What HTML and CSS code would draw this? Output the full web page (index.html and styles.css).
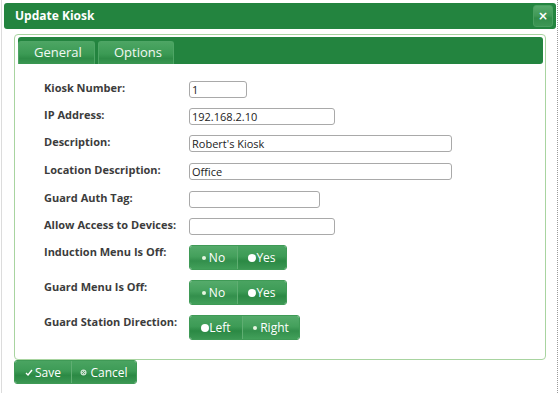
FILE: index.html
```html
<!DOCTYPE html>
<html lang="en">
<head>
    <meta charset="UTF-8">
    <title>Update Kiosk</title>
    <link rel="stylesheet" href="styles.css">
</head>
<body>
<div class="window">
    <div class="dialog">
        <div class="titlebar">
            <span class="title">Update Kiosk</span>
            <button class="close-btn" type="button">&times;</button>
        </div>

        <div class="panel">
            <div class="tabbar">
                <div class="tab active">General</div>
                <div class="tab">Options</div>
            </div>

            <!-- General tab -->
            <form class="kiosk-form">
                <div class="row">
                    <label>Kiosk Number:</label>
                    <input type="text" class="w-num" value="1">
                </div>
                <div class="row">
                    <label>IP Address:</label>
                    <input type="text" class="w-mid" value="192.168.2.10">
                </div>
                <div class="row r28">
                    <label>Description:</label>
                    <input type="text" class="w-long" value="Robert's Kiosk">
                </div>
                <div class="row r28">
                    <label>Location Description:</label>
                    <input type="text" class="w-long" value="Office">
                </div>
                <div class="row">
                    <label>Guard Auth Tag:</label>
                    <input type="text" class="w-short" value="">
                </div>
                <div class="row">
                    <label>Allow Access to Devices:</label>
                    <input type="text" class="w-mid" value="">
                </div>
                <div class="row r35">
                    <label>Induction Menu Is Off:</label>
                    <div class="radio-set">
                        <span class="seg on seg-no"><i class="dot"></i>No</span>
                        <span class="seg seg-yes"><i class="dot"></i>Yes</span>
                    </div>
                </div>
                <div class="row r35">
                    <label>Guard Menu Is Off:</label>
                    <div class="radio-set">
                        <span class="seg on seg-no"><i class="dot"></i>No</span>
                        <span class="seg seg-yes"><i class="dot"></i>Yes</span>
                    </div>
                </div>
                <div class="row">
                    <label>Guard Station Direction:</label>
                    <div class="radio-set">
                        <span class="seg seg-left"><i class="dot"></i>Left</span>
                        <span class="seg on seg-right"><i class="dot"></i>Right</span>
                    </div>
                </div>
            </form>
        </div>

        <div class="buttons">
            <span class="seg btn-save">
                <svg width="8" height="7" viewBox="0 0 8 7"><polyline points="1,4 3,6 7,1" fill="none" stroke="#fff" stroke-width="1.4"/></svg>Save
            </span>
            <span class="seg btn-cancel">
                <svg width="7" height="7" viewBox="0 0 7 7"><circle cx="3.5" cy="3.5" r="3" fill="#c9e3cf"/><path d="M2 2 L5 5 M5 2 L2 5" stroke="#5a9a68" stroke-width="0.9"/></svg>Cancel
            </span>
        </div>
    </div>
</div>
</body>
</html>
```

FILE: styles.css
```css
body {
    margin: 0;
    font-family: "Open Sans", "Noto Sans", sans-serif;
    background-color: #fff;
}
.window {
    width: 555px;
    height: 393px;
    margin-left: 1px;
    border-left: 1px solid #dcdcdc;
    border-right: 1px dotted #9a9a9a;
}
.dialog {
    padding: 3px 0 0 2px;
}
.titlebar {
    width: 552px;
    height: 26px;
    box-sizing: border-box;
    background-color: #23843f;
    border-radius: 3px;
    display: flex;
    align-items: center;
    justify-content: space-between;
    padding: 0 3px 0 11px;
}
.title {
    color: #fff;
    font-weight: bold;
    font-size: 12px;
    margin-top: -2px;
}
.close-btn {
    width: 20px;
    height: 22px;
    border: 1px solid #4a9f60;
    border-radius: 3px;
    background: linear-gradient(#56a96b, #3f9856 50%, #328d4a 60%, #3d9654);
    color: #fff;
    font-weight: bold;
    font-size: 12px;
    line-height: 18px;
    padding: 0;
    font-family: "DejaVu Sans", sans-serif;
}
.panel {
    margin: 5px 0 0 10px;
    width: 532px;
    height: 326px;
    box-sizing: border-box;
    border: 1px solid #a8d4a0;
    border-radius: 4px;
    padding: 2px 2px 0 3px;
}
.tabbar {
    height: 27px;
    background-color: #23843f;
    border-radius: 3px;
    display: flex;
    align-items: flex-end;
    gap: 3px;
}
.tab {
    height: 23px;
    box-sizing: border-box;
    border: 1px solid #4ea565;
    border-bottom: none;
    border-radius: 3px 3px 0 0;
    background: linear-gradient(#4ca563, #3b9a54 55%, #2e8c47 75%, #3a9752);
    color: #f2f8f3;
    font-size: 13px;
    line-height: 21px;
    padding: 0 12px 0 15px;
    width: 77px;
}
.tab + .tab {
    width: 76px;
}
.kiosk-form {
    padding: 17px 0 0 26px;
}
.row {
    display: flex;
    align-items: flex-start;
    height: 27px;
}
.row.r28 {
    height: 28px;
}
.row.r35 {
    height: 35px;
}
.row label {
    width: 145px;
    font-size: 11px;
    font-weight: bold;
    color: #3c3c3c;
    line-height: 13px;
}
.row input {
    height: 17px;
    box-sizing: border-box;
    border: 1px solid #a9a9a9;
    border-radius: 3px;
    padding: 0 2px;
    font-family: "Open Sans", "Noto Sans", sans-serif;
    font-size: 11px;
    color: #222;
    background: #fff;
}
.w-num { width: 58px; }
.w-mid { width: 146px; }
.w-long { width: 263px; }
.w-short { width: 131px; }

.radio-set,
.buttons {
    display: flex;
    height: 25px;
    border-radius: 3px;
    overflow: hidden;
    border: 1px solid #3f9a56;
    box-sizing: border-box;
}
.seg {
    display: flex;
    align-items: center;
    justify-content: center;
    box-sizing: border-box;
    color: #fff;
    font-size: 12px;
    background: linear-gradient(#4aa461, #3d9b56 45%, #2b8944 65%, #3b9753);
    border-left: 1px solid #5fae72;
}
.seg:first-child {
    border-left: none;
}
.seg.on {
    background: linear-gradient(#55ab6b, #44a05c 45%, #338f4c 65%, #42a05a);
}
.dot {
    display: inline-block;
    width: 8px;
    height: 8px;
    border-radius: 50%;
    background-color: #fff;
    margin-right: 0;
}
.seg.on .dot {
    width: 4px;
    height: 4px;
    background-color: #e6f5e0;
    margin-right: 3px;
}
.seg-no { width: 47px; }
.seg-yes { width: 49px; }
.seg-left { width: 52px; }
.seg-right { width: 57px; }

.buttons {
    margin-left: 10px;
    width: 123px;
    height: 24px;
}
.btn-save { width: 57px; gap: 2px; }
.btn-cancel { width: 66px; gap: 3px; }
```
